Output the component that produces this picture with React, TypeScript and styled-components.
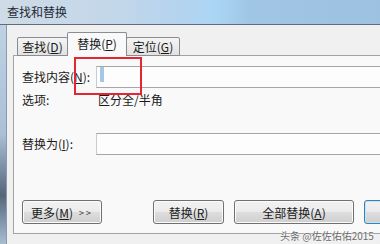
import React from 'react';
import styled, { createGlobalStyle } from 'styled-components';

const GlobalStyle = createGlobalStyle`
  html, body {
    margin: 0;
    padding: 0;
    background: #f0f0f0;
  }
  body {
    width: 380px;
    height: 244px;
    overflow: hidden;
    font-family: "Noto Sans CJK SC", "Microsoft YaHei", sans-serif;
    color: #1a1a1a;
  }
`;

const Window = styled.div`
  position: relative;
  width: 380px;
  height: 244px;
  overflow: hidden;
  display: flex;
  flex-direction: column;
  background: linear-gradient(
    to bottom,
    #c4d6e8 0%,
    #a9c0d6 55%,
    #56667a 80%,
    #7c93a8 90%,
    #a9bdd0 100%
  );
`;

const TitleBar = styled.div`
  height: 24px;
  flex-shrink: 0;
  padding-left: 7px;
  font-size: 12px;
  line-height: 24px;
  color: #1e2a36;
  border-bottom: 1px solid #5f6b78;
  background: linear-gradient(
    to right,
    #cfdbe6 0%,
    #c3d7ea 30%,
    #b4d3ee 48%,
    #acd6f5 56%,
    #a0c5e5 66%,
    #9dc1e1 100%
  );
`;

const Client = styled.div`
  flex: 1;
  align-self: flex-start;
  width: 520px;
  margin-left: 6px;
  padding: 7px 0 0 6px;
  box-sizing: border-box;
  background: #f0f0f0;
  border-left: 1px solid #8c99a6;
`;

const TabRow = styled.div`
  display: flex;
  align-items: flex-end;
  height: 24px;
  padding-left: 5px;
  margin-bottom: -1px;
  position: relative;
  z-index: 1;
`;

const Tab = styled.div<{ $active?: boolean; $w: number }>`
  width: ${({ $w }) => $w}px;
  height: ${({ $active }) => ($active ? 24 : 19)}px;
  box-sizing: border-box;
  display: flex;
  align-items: center;
  justify-content: center;
  font-size: 12px;
  border: 1px solid #898c95;
  border-bottom: ${({ $active }) => ($active ? 'none' : '1px solid #898c95')};
  margin-left: -1px;
  border-radius: 2px 2px 0 0;
  background: ${({ $active }) =>
    $active ? '#f9f9f9' : 'linear-gradient(to bottom, #f4f4f4, #e2e2e2)'};
  padding-bottom: ${({ $active }) => ($active ? 2 : 0)}px;
`;

const Panel = styled.div`
  height: 179px;
  box-sizing: border-box;
  border: 1px solid #a3a3a3;
  background: #f9f9f9;
  padding: 10px 0 9px 8px;
  display: flex;
  flex-direction: column;
`;

const Row = styled.div<{ $gap?: number }>`
  display: flex;
  align-items: center;
  margin-top: ${({ $gap }) => $gap ?? 0}px;
`;

const Label = styled.span`
  width: 74px;
  font-size: 12px;
  line-height: 16px;
  white-space: nowrap;
`;

const Value = styled.span`
  font-size: 12px;
  line-height: 16px;
  margin-left: 2px;
`;

const InputBox = styled.div`
  width: 420px;
  height: 22px;
  box-sizing: border-box;
  border: 1px solid #a6a6a6;
  border-left-color: #c9cbd2;
  background: #fdfdfd;
  display: flex;
  align-items: flex-start;
`;

const Caret = styled.span`
  width: 4px;
  height: 15px;
  margin: 0 0 0 3px;
  background: #a5c6e7;
`;

const Spacer = styled.div`
  flex: 1;
`;

const ButtonRow = styled.div`
  display: flex;
  align-items: center;
`;

const Button = styled.div<{ $w: number; $ml?: number; $default?: boolean }>`
  width: ${({ $w }) => $w}px;
  height: 24px;
  margin-left: ${({ $ml }) => $ml ?? 0}px;
  box-sizing: border-box;
  display: flex;
  align-items: center;
  justify-content: center;
  flex-shrink: 0;
  font-size: 12px;
  white-space: nowrap;
  border: 1px solid ${({ $default }) => ($default ? '#3c7fb1' : '#707070')};
  border-radius: 3px;
  background: linear-gradient(
    to bottom,
    #f2f2f2 0%,
    #ebebeb 48%,
    #dddddd 52%,
    #cfcfcf 100%
  );
  box-shadow: ${({ $default }) =>
    $default ? 'inset 0 0 0 1px #bfe6fb' : 'inset 0 0 0 1px #fbfbfb'};
`;

const Arrows = styled.span`
  font-size: 9px;
  letter-spacing: 2px;
  margin-left: 6px;
  color: #333;
`;

const Highlight = styled.div`
  position: absolute;
  left: 74px;
  top: 57px;
  width: 68px;
  height: 38px;
  box-sizing: border-box;
  border: 2px solid #e3262f;
`;

const Watermark = styled.div`
  position: absolute;
  left: 280px;
  top: 229px;
  font-size: 10px;
  line-height: 13px;
  color: #6a6a6a;
  white-space: nowrap;
  text-shadow: 0 0 2px #fff, 0 0 1px #fff;
`;

export default function App() {
  return (
    <>
      <GlobalStyle />
      <Window>
        <TitleBar>查找和替换</TitleBar>
        <Client>
          <TabRow>
            <Tab $w={51}>
              查找(<u>D</u>)
            </Tab>
            <Tab $w={60} $active>
              替换(<u>P</u>)
            </Tab>
            <Tab $w={54}>
              定位(<u>G</u>)
            </Tab>
          </TabRow>
          <Panel>
            <Row>
              <Label>
                查找内容(<u>N</u>):
              </Label>
              <InputBox>
                <Caret />
              </InputBox>
            </Row>
            <Row $gap={4}>
              <Label>选项:</Label>
              <Value>区分全/半角</Value>
            </Row>
            <Row $gap={25}>
              <Label>
                替换为(<u>I</u>):
              </Label>
              <InputBox />
            </Row>
            <Spacer />
            <ButtonRow>
              <Button $w={80}>
                更多(<u>M</u>)<Arrows>&gt;&gt;</Arrows>
              </Button>
              <Button $w={71} $ml={51}>
                替换(<u>R</u>)
              </Button>
              <Button $w={120} $ml={10}>
                全部替换(<u>A</u>)
              </Button>
              <Button $w={110} $ml={10} $default>
                查找下一个(<u>F</u>)
              </Button>
            </ButtonRow>
          </Panel>
        </Client>
        <Highlight />
        <Watermark>头条 @佐佐佑佑2015</Watermark>
      </Window>
    </>
  );
}
